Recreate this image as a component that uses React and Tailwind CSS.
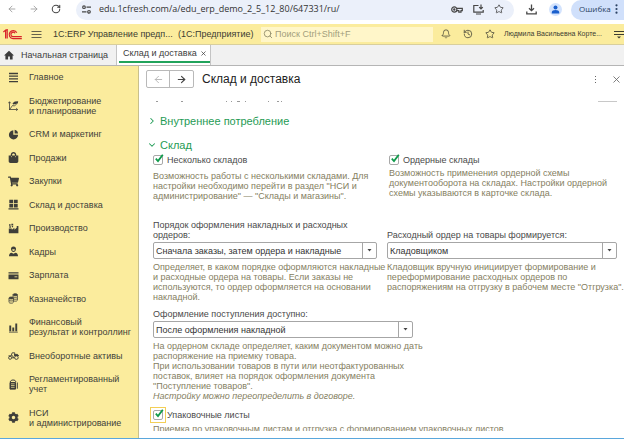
import { useState } from 'react'
import { Search, Bell, Star, History, X, ArrowLeft, ArrowRight, RotateCw, ChevronDown, ChevronRight } from 'lucide-react'
import { FaShoppingBag, FaShoppingCart, FaCog } from 'react-icons/fa'

const glyph = 'w-[11px] h-[11px] shrink-0'

function MenuIcon() {
  return (
    <svg className={glyph} viewBox="0 0 11 11" stroke="currentColor" strokeWidth="1.3">
      <path d="M1 1.5h9M1 4.2h9M1 6.9h9M1 9.6h9" />
    </svg>
  )
}

function PlanIcon() {
  return (
    <svg className={glyph} viewBox="0 0 11 11" fill="none" stroke="currentColor" strokeWidth=".8">
      <path d="M1.5 10V2M.3 3.3l1.2-1.6 1.2 1.6M1 9.5h8.5M8.2 8.2l1.5 1.3-1.5 1.3M2 9l2.5-3.5 2 .5 2.5-2.5" />
      <path d="M4.5 3.2 6.8 1.6l3.4-.4-.4 2-2 .8-2.6.4z" fill="currentColor" stroke="none" />
    </svg>
  )
}

function PieIcon() {
  return (
    <svg className={glyph} viewBox="0 0 11 11" fill="currentColor">
      <path d="M5.3 1.2v4.6h4.8A4.6 4.6 0 1 1 5.3 1.2z" />
      <path d="M6.6.8a4 4 0 0 1 3.4 3.7H6.6z" />
    </svg>
  )
}

function StockIcon() {
  return (
    <svg className={glyph} viewBox="0 0 11 11" fill="currentColor">
      <path d="M1.3.8h3.8v3.4H1.3zM5.9.8h3.8v3.4H5.9zM1.3 5h3.8v3.4H1.3zM5.9 5h3.8v3.4H5.9zM.5 9.2h10v1.2H.5z" />
    </svg>
  )
}

function FactoryIcon() {
  return (
    <svg className={glyph} viewBox="0 0 11 11" fill="currentColor">
      <path d="M.8 10.3V5.4h3v1.4l2.6-2v2l2.3-2V3h1.7v7.3zM1 1.2h1.6v1.5H1zM3.4.7h1.8v1.7H3.4zM1.3 3.2h1.6v1.5H1.3zM3.8 3.1h1.3v1.2H3.8z" />
    </svg>
  )
}

function PersonIcon() {
  return (
    <svg className={glyph} viewBox="0 0 11 11" fill="currentColor">
      <path d="M5.5.5c1.7 0 2.5 1.1 2.5 2.6S7 6 5.5 6 3 4.6 3 3.1 3.8.5 5.5.5z" />
      <path d="M1 10.3c0-2.1.8-3.3 2.6-3.6l1.9 1 1.9-1c1.8.3 2.6 1.5 2.6 3.6z" />
      <path d="M4.3 3.3h2.4v.7c0 .5-.5.9-1.2.9s-1.2-.4-1.2-.9z" fill="#fbec9d" />
    </svg>
  )
}

function CardIcon() {
  return (
    <svg className={glyph} viewBox="0 0 11 11" fill="currentColor">
      <path d="M.5 2.3h10v1.2H.5zM.5 4.5h10v4.8H.5z" />
      <path d="M6.5 6.8h2.8" stroke="#fbec9d" strokeWidth=".8" />
    </svg>
  )
}

function CoinsIcon() {
  return (
    <svg className={glyph} viewBox="0 0 11 11" fill="#fbec9d" stroke="currentColor" strokeWidth=".8">
      <path d="M5 1.7v5.6c0 1.2 4.4 1.2 4.4 0V1.7" />
      <path d="M5 3.6c0 1 4.4 1 4.4 0M5 5.5c0 1 4.4 1 4.4 0" />
      <ellipse cx="7.2" cy="1.7" rx="2.2" ry="1" fill="currentColor" />
      <path d="M1 5v4.3c0 1.2 4.4 1.2 4.4 0V5" />
      <path d="M1 7.2c0 1 4.4 1 4.4 0" />
      <ellipse cx="3.2" cy="5" rx="2.2" ry="1" fill="currentColor" />
    </svg>
  )
}

function BarsIcon() {
  return (
    <svg className={glyph} viewBox="0 0 11 11" fill="currentColor">
      <path d="M1.3 3.5h1.9v5.8H1.3zM4.3 5.5h1.9v3.8H4.3zM7.3 1.5h1.9v7.8H7.3zM1 9.8h8.8v.6H1z" />
    </svg>
  )
}

function TruckIcon() {
  return (
    <svg className={glyph} viewBox="0 0 11 11" fill="none" stroke="currentColor" strokeWidth=".9">
      <circle cx="2.1" cy="7.8" r="1.5" />
      <circle cx="8.4" cy="7.6" r="1.8" />
      <path d="M.5 5.8h4.2l.8 2M3.2 5.5l1-2.7h2.5v2.7h3.8M4 7.8h2.5" />
      <path d="M6.5 4.4h3l1 1.2h-4z" fill="currentColor" />
    </svg>
  )
}

function LedgerIcon() {
  return (
    <svg className={glyph} viewBox="0 0 11 11" fill="none" stroke="currentColor" strokeWidth="1">
      <path d="M2 3.5h5.5v6.6H2z" fill="currentColor" />
      <path d="M2.2 3c.4-1.5 1.4-2 2.8-2 1.7 0 2.8.6 2.8 2M9.3 3.5v6.2" />
      <path d="M3 4.8h3.6M3 6.5h3.6M3 8.3h3.6" stroke="#fbec9d" strokeWidth=".7" />
    </svg>
  )
}

const sections = [
  { icon: MenuIcon, lines: ['Главное'] },
  { icon: PlanIcon, lines: ['Бюджетирование', 'и планирование'] },
  { icon: PieIcon, lines: ['CRM и маркетинг'] },
  { icon: FaShoppingBag, lines: ['Продажи'] },
  { icon: FaShoppingCart, lines: ['Закупки'] },
  { icon: StockIcon, lines: ['Склад и доставка'] },
  { icon: FactoryIcon, lines: ['Производство'] },
  { icon: PersonIcon, lines: ['Кадры'] },
  { icon: CardIcon, lines: ['Зарплата'] },
  { icon: CoinsIcon, lines: ['Казначейство'] },
  { icon: BarsIcon, lines: ['Финансовый', 'результат и контроллинг'] },
  { icon: TruckIcon, lines: ['Внеоборотные активы'] },
  { icon: LedgerIcon, lines: ['Регламентированный', 'учет'] },
  { icon: FaCog, lines: ['НСИ', 'и администрирование'] },
]

function BrowserBar() {
  return (
    <div className="h-6 shrink-0 flex items-start bg-white text-[#474747]">
      <div className="w-[76px] h-[18px] pl-[7px] flex items-center gap-3">
        <button aria-label="Назад" className="text-[#9a9a9a]"><ArrowLeft size={10} /></button>
        <button aria-label="Вперёд" className="text-[#9a9a9a]"><ArrowRight size={10} /></button>
        <button aria-label="Обновить"><RotateCw size={10} strokeWidth={2.5} /></button>
      </div>
      <div className="flex-1 min-w-0 h-5 pb-[2px] pl-[6px] pr-[10px] flex items-center rounded-full bg-[#ebf0fa]">
        <svg className="w-[9px] h-[9px]" viewBox="0 0 9 9" fill="none" stroke="currentColor" strokeWidth="1.2">
          <circle cx="2" cy="2.2" r="1.3" />
          <path d="M4.5 2.2H9M0 6.8h4.5" />
          <circle cx="7" cy="6.8" r="1.3" />
        </svg>
        <span className="flex-1 min-w-0 truncate ml-2 font-['Open_Sans'] text-[9px] leading-[12px] text-[#333]">
          edu.1cfresh.com/a/edu_erp_demo_2_5_12_80/647331/ru/
        </span>
        <div className="flex items-center gap-[10px]">
          <button aria-label="Пароли">
            <svg className="w-3 h-[11px]" viewBox="0 0 12 11" fill="none" stroke="currentColor" strokeWidth="1.2">
              <circle cx="3.3" cy="5.5" r="2.6" />
              <circle cx="3.3" cy="5.5" r=".6" fill="currentColor" />
              <path d="M6 4.3h5.3v2.3H10v1.5H7.8V6.7H6" />
            </svg>
          </button>
          <button aria-label="Установить">
            <svg className="w-[11px] h-[11px]" viewBox="0 0 11 11" fill="none" stroke="currentColor" strokeWidth="1.2">
              <path d="M5.5 1.5H.8v6.7h9.4V6M3 10h5M8 .5v4M6.2 3.2 8 5l1.8-1.8" />
            </svg>
          </button>
          <button aria-label="В закладки"><Star size={10} /></button>
        </div>
      </div>
      <div className="h-[18px] pl-3 pr-[9px] flex items-center gap-3">
        <button aria-label="Загрузки">
          <svg className="w-[11px] h-[11px]" viewBox="0 0 11 11" fill="none" stroke="currentColor" strokeWidth="1.3">
            <path d="M5.5.5v6M3 4.2l2.5 2.5L8 4.2M.8 7.5v2.4h9.4V7.5" />
          </svg>
        </button>
        <button aria-label="Профиль" className="w-[13px] h-[13px] rounded-full bg-[#d3e3fd] flex items-center justify-center">
          <svg className="w-[9px] h-[9px]" viewBox="0 0 9 9" fill="#1a5fcc">
            <circle cx="4.5" cy="2.5" r="2" />
            <path d="M.8 8.5V7c0-1 1.7-1.9 3.7-1.9S8.2 6 8.2 7v1.5z" />
          </svg>
        </button>
      </div>
      <button className="w-[53px] h-5 pb-[2px] pl-2 flex items-center gap-1 rounded-l-full bg-[#d0e0fb] font-['Open_Sans'] text-[8px] leading-[12px] text-[#2b4263]">
        Ошибка
        <svg className="w-[3px] h-[10px] shrink-0" viewBox="0 0 3 10" fill="currentColor">
          <circle cx="1.5" cy="1.3" r="1.1" /><circle cx="1.5" cy="5" r="1.1" /><circle cx="1.5" cy="8.7" r="1.1" />
        </svg>
      </button>
    </div>
  )
}

function AppBar() {
  return (
    <header className="h-[21px] shrink-0 flex items-center bg-[#fbec9d] border-b border-[#d9cf9c] text-[9px] leading-[12px] text-[#3c3c32]">
      <svg className="ml-[3px] w-[19px] h-[11px] shrink-0" viewBox="0 0 19 11" fill="none" stroke="#d8232a" strokeWidth="1.2">
        <path d="M.3 3 2.6 1.2V9.5M4.2 9.5V.7L2.6 1.5" />
        <path d="M13.8 3.8A4 4 0 1 0 10 9.6h8.8" />
        <path d="M12 4.3A2.2 2.2 0 1 0 10.2 7.6h8.6" />
      </svg>
      <button aria-label="Меню" className="ml-[9px]">
        <svg className="w-[11px] h-[9px]" viewBox="0 0 11 9" stroke="#66624d" strokeWidth="1">
          <path d="M.5 1.5h10M.5 4.5h10M.5 7.5h10" />
        </svg>
      </button>
      <span className="w-[125px] ml-[11px] whitespace-nowrap">1С:ERP Управление предп...</span>
      <span className="w-[77px] whitespace-nowrap">(1С:Предприятие)</span>
      <label className="ml-[6px] flex-1 min-w-0 h-[15px] pl-[2px] flex items-center gap-[2px] bg-[#fff6c9] text-[#8d8866]">
        <Search size={10} strokeWidth={2} className="shrink-0" />
        <input aria-label="Поиск" placeholder="Поиск Ctrl+Shift+F" className="w-full min-w-0 outline-none placeholder:text-[#a39e7c]" />
      </label>
      <div className="ml-2 flex items-center gap-3">
        <button aria-label="Уведомления"><Bell size={10} strokeWidth={1.8} /></button>
        <button aria-label="История"><History size={10} strokeWidth={1.8} /></button>
        <button aria-label="Избранное"><Star size={10} strokeWidth={1.8} /></button>
      </div>
      <button className="ml-[9px] w-[110px] text-left text-[7px] whitespace-nowrap">Людмила Васильевна Корте...</button>
      <button aria-label="Настройки">
        <svg className="w-[10px] h-[9px]" viewBox="0 0 10 9" stroke="currentColor" strokeWidth="1">
          <path d="M0 1.5h10M0 4.5h10" />
          <path d="M3 6.5h4L5 8.5z" fill="currentColor" stroke="none" />
        </svg>
      </button>
    </header>
  )
}

function Tabs() {
  return (
    <nav className="h-[21px] shrink-0 flex bg-[#f1f1f1] border-b border-[#b5b5b5] text-[9px] leading-[12px] text-[#3c3c3c]">
      <button className="w-[117px] pl-1 flex items-center gap-[7px] border-r border-[#c4c4c4] whitespace-nowrap">
        <svg className="w-[10px] h-[10px] shrink-0" viewBox="0 0 10 10" fill="currentColor">
          <path d="M5 .8 0 5.5h1.4v4h2.7V6.6h1.8v2.9h2.7v-4H10z" />
        </svg>
        Начальная страница
      </button>
      <div className="w-[94px] pl-[2px] bg-white border-r border-[#c4c4c4] flex">
        <div className="flex-1 mb-[2px] pl-1 pr-[3px] flex items-center justify-between border-b-2 border-[#21a35b] whitespace-nowrap">
          <span>Склад и доставка</span>
          <button aria-label="Закрыть вкладку"><X size={7} strokeWidth={2.5} /></button>
        </div>
      </div>
    </nav>
  )
}

function Sidebar() {
  return (
    <aside className="w-[139px] shrink-0 pt-[6px] pb-[10px] pl-2 flex flex-col justify-between bg-[#fbec9d] border-r border-[#c9c08c] text-[9px] leading-[10px] text-[#3f3f3a]">
      {sections.map(({ icon: Icon, lines }) => (
        <button key={lines[0]} className="flex items-center gap-[10px] text-left whitespace-nowrap">
          <span className="w-[11px] h-[10px] flex items-center justify-center shrink-0">
            <Icon className={glyph} />
          </span>
          <span>
            {lines.map((line) => <span key={line} className="block">{line}</span>)}
          </span>
        </button>
      ))}
    </aside>
  )
}

function Check({ label, focused }) {
  const [on, setOn] = useState(true)
  return (
    <label className="flex items-center gap-1 h-3 leading-[12px] text-[#4a4a4a]">
      <span className={focused ? 'relative w-[10px] h-[10px] outline outline-[#f3cf57] outline-offset-2' : 'relative w-[10px] h-[10px]'}>
        <input
          type="checkbox"
          checked={on}
          onChange={() => setOn(!on)}
          className="block appearance-none w-[10px] h-[10px] rounded-[2px] border border-[#a8a8a8] bg-white"
        />
        {on && (
          <svg className="absolute left-[2px] -top-px w-[9px] h-[9px] pointer-events-none" viewBox="0 0 9 9" fill="none" stroke="#0f9a4b" strokeWidth="1.8">
            <path d="M.8 4.6 3 7 7.8.8" />
          </svg>
        )}
      </span>
      {label}
    </label>
  )
}

function Dropdown({ label, options, className }) {
  return (
    <label className={className}>
      <span className="block text-[#4a4a4a]">{label}</span>
      <span className="relative mt-[2px] flex h-[17px] border border-[#a6a6a6] rounded-[2px] bg-white text-[#333]">
        <select className="appearance-none w-full pl-[2px] pr-4 outline-none">
          {options.map((o) => <option key={o}>{o}</option>)}
        </select>
        <span className="absolute right-0 inset-y-0 w-[14px] flex items-center justify-center border-l border-[#a6a6a6] pointer-events-none">
          <svg className="w-[5px] h-[3px]" viewBox="0 0 5 3" fill="#444"><path d="M.5 0h4l-2 2.5z" /></svg>
        </span>
      </span>
    </label>
  )
}

function Hint({ className, children }) {
  return <p className={`text-[#85805f] ${className}`}>{children}</p>
}

function Settings() {
  return (
    <div className="flex-1 min-h-0 mb-[7px] overflow-hidden text-[9px] leading-[10px]">
      {/* tail of the scrolled-away group */}
      <div className="h-[6px] mr-[7px] pl-[17px] flex items-center justify-between">
        <svg className="w-32 h-[3px]" viewBox="0 0 128 3" fill="#9a9a9a">
          <path d="M0 1h2v1H0zM25 1h2v1h-2zM70 1h1v1h-1zM75 1h1v1h-1zM81 1h3v1h-3zM89 1h1v1h-1zM112 1h1v1h-1zM121 1h2v1h-2zM125 1h1v1h-1z" />
        </svg>
        <div className="w-[19px] h-px bg-[#c8c8c8]" />
      </div>

      <h2 className="mt-[10px] ml-2">
        <button className="flex items-center gap-[3px] text-[11px] leading-[14px] text-[#1f9b55]">
          <ChevronRight size={10} strokeWidth={2.5} />
          Внутреннее потребление
        </button>
      </h2>
      <h2 className="mt-[10px] ml-2">
        <button className="flex items-center gap-[3px] text-[11px] leading-[14px] text-[#1f9b55]">
          <ChevronDown size={10} strokeWidth={2.5} />
          Склад
        </button>
      </h2>

      <div className="pl-[14px] pr-[7px]">
        <div className="mt-[2px] h-[66px] grid grid-cols-[236px_minmax(0,1fr)] items-start">
          <div>
            <Check label="Несколько складов" />
            <Hint className="mt-[5px] whitespace-nowrap">
              Возможность работы с несколькими складами. Для<br />
              настройки необходимо перейти в раздел "НСИ и<br />
              администрирование" — "Склады и магазины".
            </Hint>
          </div>
          <div>
            <Check label="Ордерные склады" />
            <Hint className="mt-[2px] whitespace-nowrap">
              Возможность применения ордерной схемы<br />
              документооборота на складах. Настройки ордерной<br />
              схемы указываются в карточке склада.
            </Hint>
          </div>
        </div>

        <div className="grid grid-cols-[224px_minmax(0,1fr)] gap-x-[10px]">
          <Dropdown
            className="self-end"
            label={<>Порядок оформления накладных и расходных<br />ордеров:</>}
            options={['Сначала заказы, затем ордера и накладные', 'Сначала накладные, затем ордера']}
          />
          <Dropdown
            className="self-end"
            label="Расходный ордер на товары формируется:"
            options={['Кладовщиком', 'Автоматически']}
          />
          <Hint className="mt-[3px] whitespace-nowrap">
            Определяет, в каком порядке оформляются накладные<br />
            и расходные ордера на товары. Если заказы не<br />
            используются, то ордер оформляется на основании<br />
            накладной.
          </Hint>
          <Hint className="mt-[3px] whitespace-nowrap">
            Кладовщик вручную инициирует формирование и<br />
            переформирование расходных ордеров по<br />
            распоряжениям на отгрузку в рабочем месте "Отгрузка".
          </Hint>
        </div>

        <Dropdown
          className="mt-[7px] block w-[260px]"
          label="Оформление поступления доступно:"
          options={['После оформления накладной', 'До оформления накладной']}
        />
        <Hint className="mt-[3px]">
          На ордерном складе определяет, каким документом можно дать<br />
          распоряжение на приемку товара.<br />
          При использовании товаров в пути или неотфактурованных<br />
          поставок, влияет на порядок оформления документа<br />
          "Поступление товаров".<br />
          <em>Настройку можно переопределить в договоре.</em>
        </Hint>

        <div className="mt-2">
          <Check label="Упаковочные листы" focused />
          <Hint className="mt-[3px] whitespace-nowrap">
            Приемка по упаковочным листам и отгрузка с формированием упаковочных листов.
          </Hint>
        </div>
      </div>
    </div>
  )
}

export default function App() {
  return (
    <div className="h-screen flex flex-col overflow-hidden bg-white font-['Liberation_Sans',sans-serif]">
      <BrowserBar />
      <AppBar />
      <Tabs />
      <div className="flex-1 min-h-0 flex border-b border-[#5aa7dc]">
        <Sidebar />
        <main className="flex-1 min-w-0 flex flex-col">
          <div className="h-8 shrink-0 pt-1 pl-[7px] pr-[2px] flex items-start">
            <div className="flex h-[18px] rounded-[2px] border border-[#b9b9b9]">
              <button aria-label="Назад" className="w-[23px] flex items-center justify-center border-r border-[#b9b9b9] text-[#b5b5b5]">
                <ArrowLeft size={11} />
              </button>
              <button aria-label="Вперёд" className="w-[23px] flex items-center justify-center text-[#444]">
                <ArrowRight size={11} strokeWidth={2.5} />
              </button>
            </div>
            <h1 className="ml-2 text-[12px] leading-[18px] text-[#222]">Склад и доставка</h1>
            <div className="ml-auto h-[18px] flex items-center gap-[14px] text-[#666]">
              <button aria-label="Ещё">
                <svg className="w-[3px] h-[7px]" viewBox="0 0 3 7" fill="currentColor"><path d="M1 0h1v1H1zM1 3h1v1H1zM1 6h1v1H1z" /></svg>
              </button>
              <button aria-label="Закрыть"><X size={11} strokeWidth={1.8} /></button>
            </div>
          </div>
          <Settings />
        </main>
      </div>
    </div>
  )
}
